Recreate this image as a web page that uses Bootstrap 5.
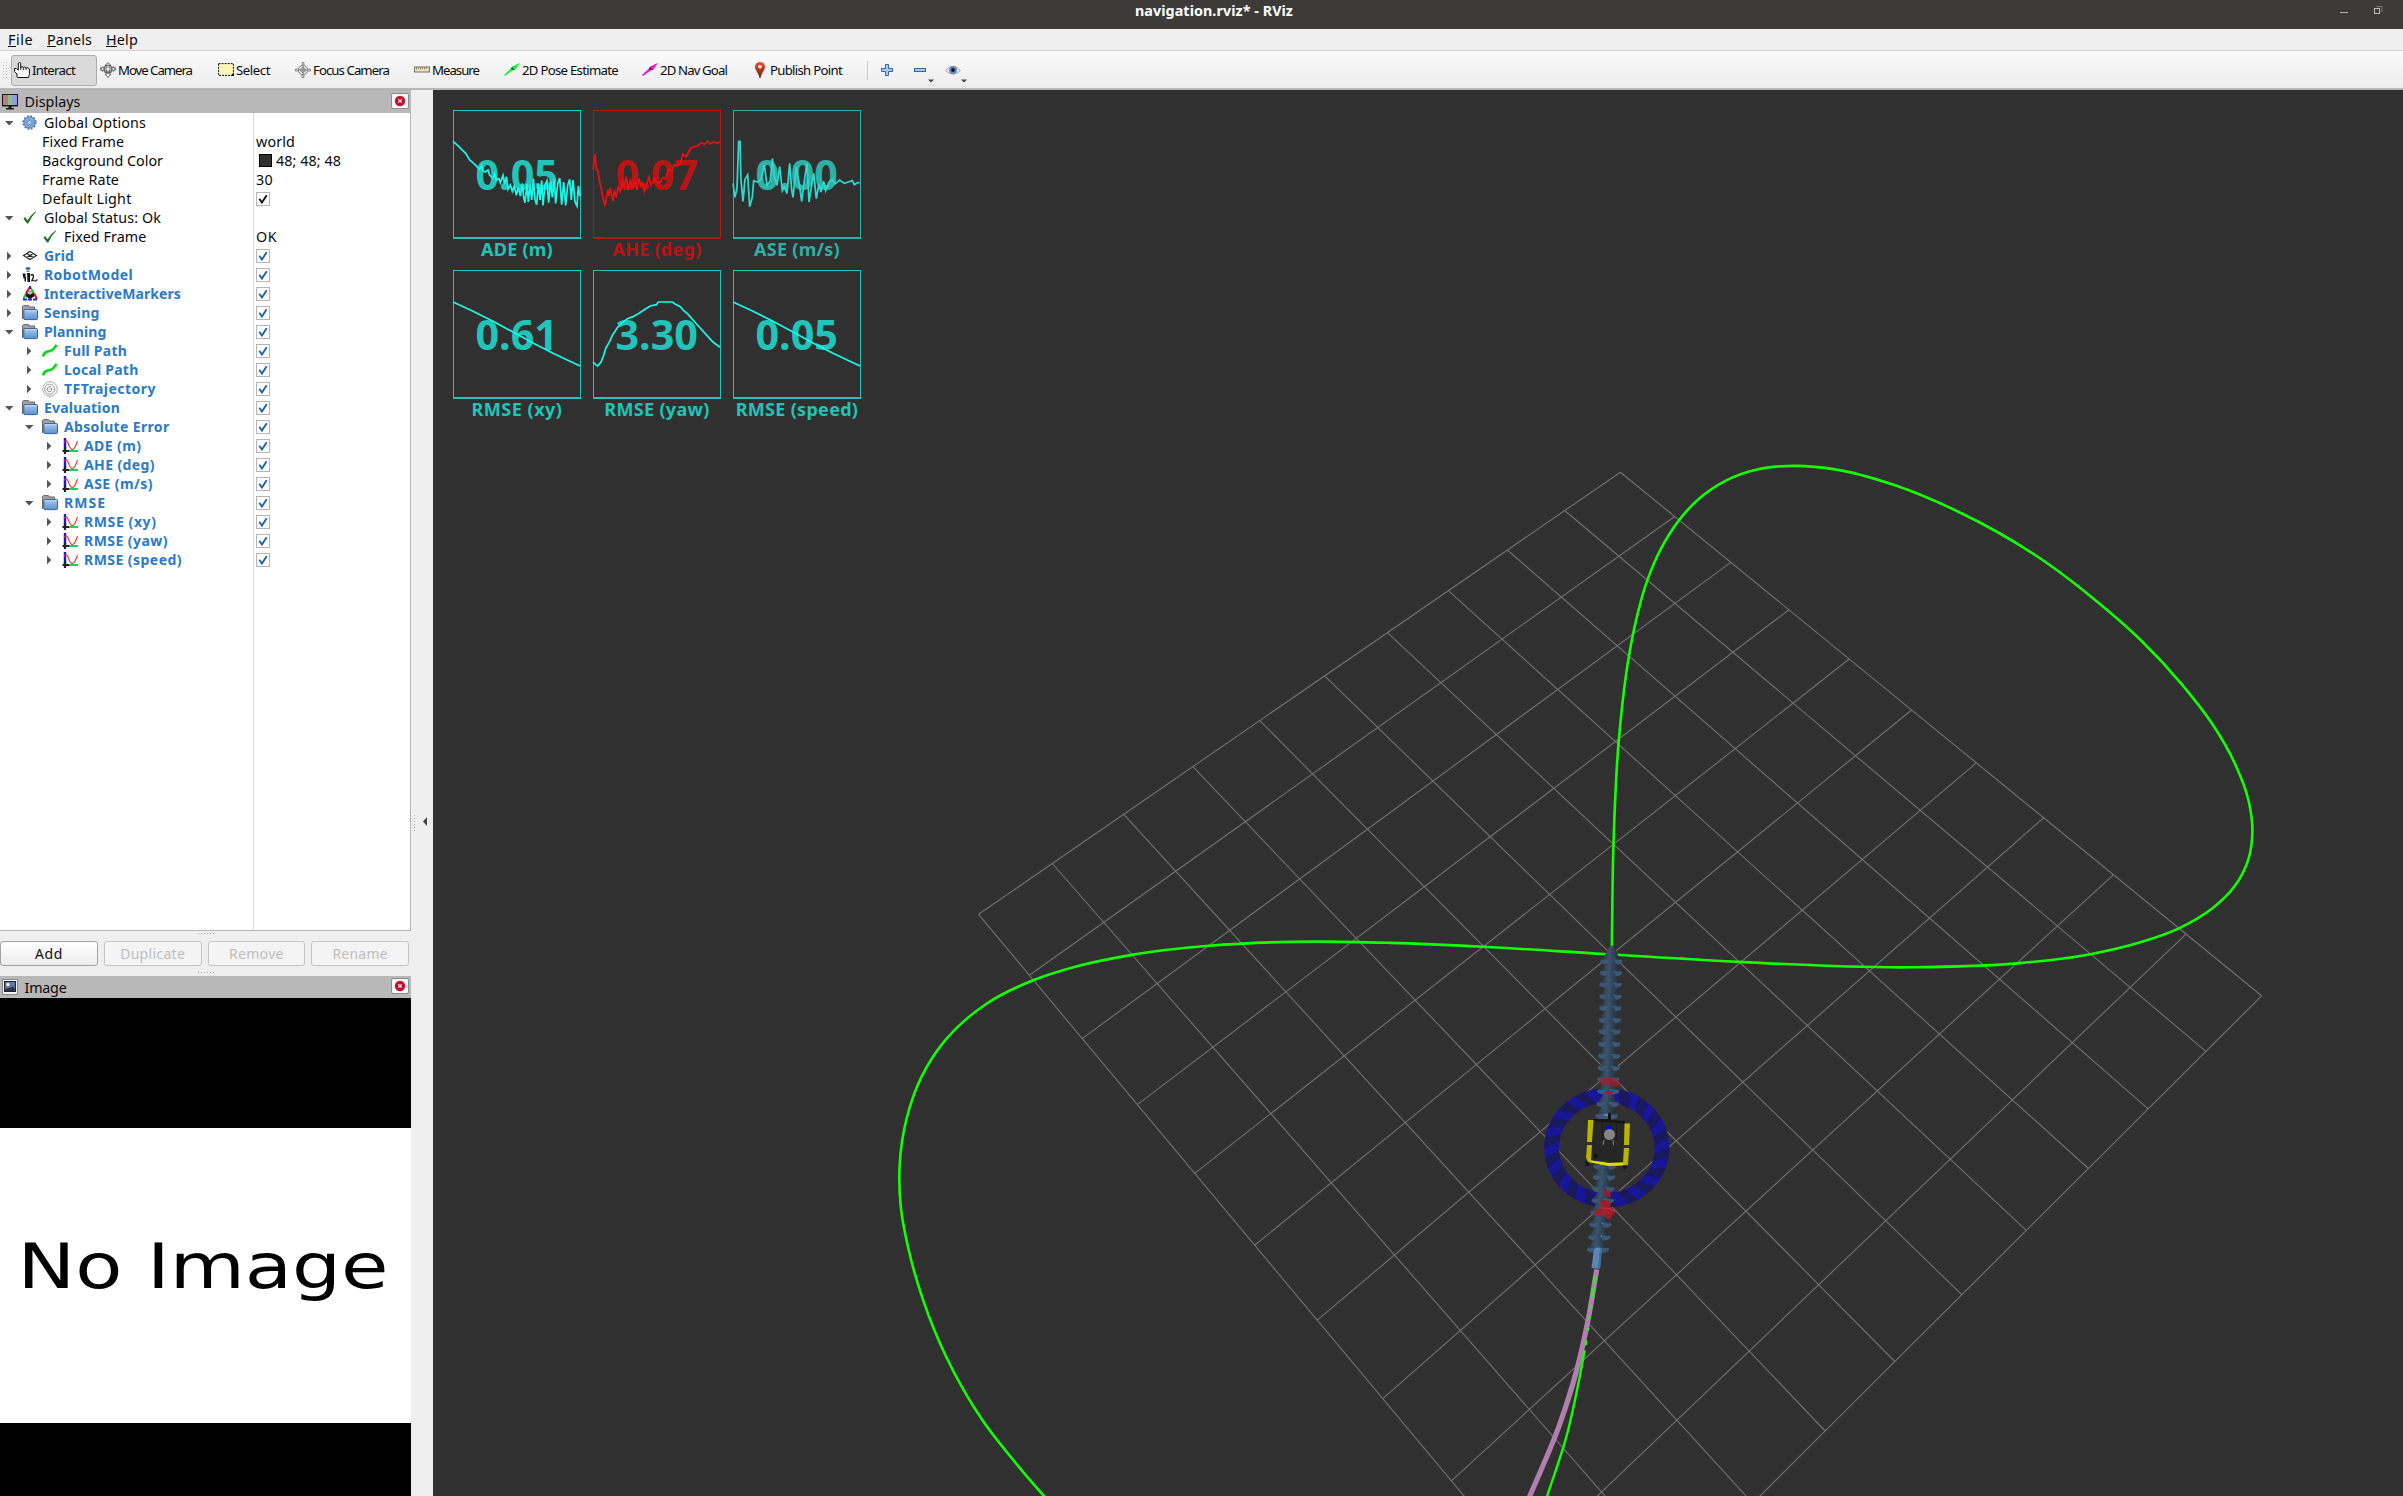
<!DOCTYPE html>
<html lang="en">
<head>
<meta charset="utf-8">
<title>navigation.rviz* - RViz</title>
<link href="https://cdn.jsdelivr.net/npm/bootstrap@5.3.0/dist/css/bootstrap.min.css" rel="stylesheet">
<style>
body{font-family:"Noto Sans","Open Sans",sans-serif;font-size:14.3px;line-height:19px;color:#0a0a0a;background:#efefef;overflow:hidden}
.window{width:2403px;height:1496px}
.titlebar{height:29px;background:#3c3b39;color:#fff;font-weight:700;padding-left:1135px}
.titlebar .caption{width:1205px;line-height:22px}
.menus{height:22px;padding-left:8px;gap:14px;background:#efefef;border-bottom:1px solid #d2d2d2}
.tools{height:39px;background:linear-gradient(#fafafa,#ededed);border-bottom:1px solid #b4b4b4;box-shadow:inset 0 -1px 0 #b8b8b8;padding-left:3px;font-size:13.2px}
.tool{height:31px;padding-left:3px;gap:2px;white-space:nowrap}
.tool-on{background:#dadada;border:1px solid #acacac;border-radius:3px;padding-left:2px}
.grip{width:8px}
.tools svg.ic,.tree svg.ic{width:16px;height:16px;flex:none}
.side{width:411px}
.gutter{width:22px}
.panel-head{background:#b8b8b8;padding:0 2px}
.head-label{gap:6.5px}
.closer{width:18px;height:16px;background:#f8f8f8;border:1px solid #8c8c8c;border-radius:2px;margin-bottom:2px}
.tree{height:818px;background:#fff;border-right:1px solid #b4b4b4;border-bottom:1px solid #b4b4b4}
.names{width:254px;border-right:1px solid #d8d8d8}
.line{height:19px;white-space:nowrap}
.twist{width:18px;height:10px;flex:none;margin-right:4px}
.disp{font-weight:700;color:#2a7ac8;font-size:14px}
.ind0{padding-left:0}.ind1{padding-left:20px}.ind2{padding-left:40px}.plain{padding-left:42px}
.picto{width:16px;height:16px;margin-right:6px;flex:none}
.vals .line{padding-left:2px}
.box{width:14px;height:14px}
.swatch{width:13px;height:13px;background:#303030;border:1px solid #000;margin:0 4px 0 3px}
.btns{height:25px;gap:6px;padding-right:2px}
.pbtn{height:25px;border:1px solid #a4a4a4;border-radius:3px;background:linear-gradient(#fff,#ececec);font-size:14px;line-height:22px;color:#111}
.pbtn:disabled{color:#bebebe;border-color:#c4c4c4;background:#f4f4f4}
.noimg{height:498px;background:#000;padding-top:130px}
.sheet{height:295px;background:#fff}
.scene{width:1970px;height:1406px;background:#303030;position:relative}
.overlays{position:absolute;left:20px;top:20px}
.plots{gap:12px}
.plot{width:128px;height:160px;--c:#20c4b8;--l:#1bf7e8;color:var(--c)}
.plot.warn{--c:#b81414;--l:#e81010}
.plot.dim{--c:#2fb0a6;--l:#2fd8cc}
.frame{height:129px;border:1px solid var(--c);border-bottom-width:2px}
.frame svg{display:block;width:126px;height:126px;overflow:visible}
.frame polyline{fill:none;stroke:var(--l);stroke-width:5.2}
.frame text{fill:var(--c);font:700 124px "Noto Sans",sans-serif;text-anchor:middle}
.cap{font-weight:700;font-size:18px;line-height:20px}
</style>
</head>
<body>
<svg width="0" height="0" class="position-absolute">
<defs>
<linearGradient id="gf" x1="0" y1="0" x2="0" y2="1"><stop offset="0" stop-color="#aac8ec"/><stop offset="1" stop-color="#5a90d0"/></linearGradient>
<linearGradient id="gp" x1="0" y1="0" x2="0" y2="1"><stop offset="0" stop-color="#f05030"/><stop offset="1" stop-color="#5a2810"/></linearGradient>
<linearGradient id="gc"><stop offset="0" stop-color="#2a3a4a"/><stop offset=".4" stop-color="#3a536c"/><stop offset="1" stop-color="#1f2a35"/></linearGradient>
<symbol id="folder" viewBox="0 0 16 16"><path d="M.5 14V1.5L1.500.6H6.500L7.500 2H12.500V5" fill="#a2a2a2" stroke="#666"/><rect x="1.800" y="4.600" width="13.700" height="10" rx="1" fill="url(#gf)" stroke="#31639c"/><path d="M2.800 5.800H14.500" stroke="#d4e4f6" stroke-width=".8"/></symbol>
<symbol id="ok" viewBox="0 0 16 16"><path d="M1.500 8.500 3 7 5.500 10.300Q9 4.500 13.800 1.200L14 2Q9 7 6.200 13.500H5Z" fill="#1c7420"/></symbol>
<symbol id="gear" viewBox="0 0 16 16"><circle cx="7.500" cy="7.500" r="5.600" fill="#8cb0dc" stroke="#3f6fae"/><circle cx="7.500" cy="7.500" r="6.400" fill="none" stroke="#4878b4" stroke-width="1.600" stroke-dasharray="1.700 1.650"/><circle cx="7.500" cy="7.500" r="3.400" fill="none" stroke="#4f7db8" stroke-dasharray="1 1"/><circle cx="7.500" cy="7.500" r="1.700" fill="#e8f0fa" stroke="#3f6fae" stroke-width=".7"/></symbol>
<symbol id="gridi" viewBox="0 0 16 16"><path d="M1.500 7.500 8 3.500 14.500 7.500 8 11.500ZM4.800 5.500 11.300 9.500M11.300 5.500 4.800 9.500" fill="none" stroke="#222" stroke-width="1.100"/></symbol>
<symbol id="robot" viewBox="0 0 16 16"><ellipse cx="6" cy="1.500" rx="2.500" ry="1.200" fill="#36508c"/><path d="M4.500 3.500H7.500V5H4.500Z" fill="#777"/><path d="M.5 6.500H3.500V11.500H1.500ZM5 6H8V15H5.500ZM2.500 10H4V14.500H2.500Z" fill="#161616"/><path d="M8.500 8 11 7.500 11.500 10 9.800 13.500H12.500M13 14.500 15.500 12.500" fill="none" stroke="#222" stroke-width="1.300"/></symbol>
<symbol id="marker" viewBox="0 0 16 16"><path d="M8 1 12 7" stroke="#18c818" stroke-width="2"/><path d="M8 1 4 7" stroke="#e01818" stroke-width="2"/><path d="M12.200 7.500 15 13" stroke="#e01818" stroke-width="2"/><path d="M4 7.500 1.500 13" stroke="#1ac81a" stroke-width="2"/><path d="M1 13.500H15" stroke="#2020f0" stroke-width="2" stroke-dasharray="4 1"/><path d="M8 0V3" stroke="#2020f0" stroke-width="2"/><path d="M8 4.500 12 7.500V10.500L8 13 4 10.500V7.500Z" fill="#151515"/><path d="M8 5 11 7 8 8.800 5 7Z" fill="#c8c8c8"/></symbol>
<symbol id="path" viewBox="0 0 16 16"><path d="M1 13.500C2 8.500 5.500 8.500 8 8 11 7.300 12 6 14.500 1.800" fill="none" stroke="#08d818" stroke-width="2.600"/></symbol>
<symbol id="spiral" viewBox="0 0 16 16"><circle cx="8" cy="8" r="7.300" fill="none" stroke="#aaa"/><circle cx="7.700" cy="8.200" r="5" fill="none" stroke="#999"/><path d="M7.500 8.500Q8 6.500 9.500 7.500 10.500 10 8 11 5 10.500 5.200 8 6 5 9 5.500" fill="none" stroke="#888" stroke-width=".9"/></symbol>
<symbol id="plot" viewBox="0 0 16 16"><path d="M3 0V12" stroke="#1414f0" stroke-width="2.400"/><path d="M4 13H16" stroke="#10d850" stroke-width="2"/><path d="M.5 13H7M3 9V16" stroke="#222" stroke-width="2.200"/><path d="M2 4.500Q4.500 1 6 5 8.500 12 10.500 11.500 13 11 15.500 3" fill="none" stroke="#f03030" stroke-width="1.100"/></symbol>
<symbol id="box" viewBox="0 0 14 14"><rect x=".5" y=".5" width="13" height="13" fill="#fff" stroke="#b4b4b4"/><path d="M3.300 6.800 5.900 10.500 10.700 3.200" fill="none" stroke="currentColor" stroke-width="1.900"/></symbol>
<symbol id="down" viewBox="0 0 18 10"><path d="M5 3H13.500L9.200 7.500Z" fill="#555"/></symbol>
<symbol id="right" viewBox="0 0 18 10"><path d="M7 .8V9.200L11.300 5Z" fill="#555"/></symbol>
<symbol id="x" viewBox="0 0 12 12"><circle cx="6" cy="6" r="5.200" fill="#c8102e"/><path d="M4.300 4.300 7.700 7.700M7.700 4.300 4.300 7.700" stroke="#fff" stroke-width="1.200"/></symbol>
</defs>
</svg>

<div class="window d-flex flex-column">
<header class="titlebar d-flex">
 <div class="caption"><span data-w="157">navigation.rviz* - RViz</span></div>
 <svg width="48" height="20"><path d="M0 12.500H8" stroke="#b8b7b3"/><path d="M36.500 6.500H42V12" fill="none" stroke="#7a7976"/><rect x="34.500" y="8.500" width="5" height="5" fill="none" stroke="#c0bfbb"/></svg>
</header>
<nav class="menus d-flex align-items-center">
 <span data-w="24"><u>F</u>ile</span><span data-w="44"><u>P</u>anels</span><span data-w="31"><u>H</u>elp</span>
</nav>
<div class="tools d-flex align-items-center">
 <svg class="grip" width="8" height="20"><path d="M.5 2V18M3.500 2V18" stroke="#bbb" stroke-dasharray="1 2"/></svg>
 <div class="tool tool-on d-flex align-items-center" style="width:86px"><svg class="ic" viewBox="0 0 16 16"><path d="M3 15V12L.6 9.500V6.500H2.500L4.300 8.200V1.200L5.500.5 6.700 1.200V5.500L8 4.600 9.300 5.500 10.700 5 12 6 14 5.800 15.400 7V12.500L14.500 15.500H3.500Z" fill="#fff" stroke="#111"/><path d="M6.700 5V8M9.300 5.500V8M12 6V8" stroke="#111" stroke-width=".9"/></svg><span data-w="42">Interact</span></div>
 <div class="tool d-flex align-items-center" style="width:118px"><svg class="ic" viewBox="0 0 16 16" fill="#eee" stroke="#555" stroke-width=".9"><path d="M8 .5 11 3.500H9.200V6H13V4.500L15.600 7 13 9.500V8H9.200V12H11L8 15.500 5 12H6.800V8H3V9.500L.4 7 3 4.500V6H6.800V3.500H5Z"/><circle cx="8" cy="7" r="4" fill="none"/><path d="M4 10H12M1 5V9M15 5V9" fill="none"/></svg><span data-w="73">Move Camera</span></div>
 <div class="tool d-flex align-items-center" style="width:77px"><svg class="ic" viewBox="0 0 16 16"><rect x=".6" y="1.600" width="14.800" height="11.800" fill="#fdf6b8" stroke="#111" stroke-dasharray="2 1"/><path d="M16 10.500V14H12.500Z"/></svg><span data-w="33">Select</span></div>
 <div class="tool d-flex align-items-center" style="width:119px"><svg class="ic" viewBox="0 0 16 16" fill="none" stroke="#777"><circle cx="8" cy="8" r="4.600"/><circle cx="8" cy="8" r="2.300"/><path d="M8 0V16M0 8H16"/><path d="M7 .5H9V3.500H7ZM7 12.500H9V15.500H7ZM.5 7H3.500V9H.5ZM12.500 7H15.500V9H12.500Z" fill="#ccc" stroke-width=".7"/></svg><span data-w="75">Focus Camera</span></div>
 <div class="tool d-flex align-items-center" style="width:90px"><svg class="ic" viewBox="0 0 16 16"><rect x=".5" y="5" width="15" height="5" fill="#ece2b0" stroke="#77745e"/><path d="M2.500 5V7.500M4.500 5V7M6.500 5V7.500M8.500 5V7M10.500 5V7.500M12.500 5V7" stroke="#77745e" stroke-width=".8"/></svg><span data-w="46">Measure</span></div>
 <div class="tool d-flex align-items-center" style="width:138px"><svg class="ic" viewBox="0 0 16 16"><path d="M0 13 7 6.500 8 4.800 16 .8 11 8 8.500 8.500 1 14Z" fill="#10f040"/><path d="M7 6.500 10.500 7.500M8 5 9 8" stroke="#087020"/></svg><span data-w="95">2D Pose Estimate</span></div>
 <div class="tool d-flex align-items-center" style="width:110px"><svg class="ic" viewBox="0 0 16 16"><path d="M0 13 7 6.500 8 4.800 16 .8 11 8 8.500 8.500 1 14Z" fill="#f010d0"/><path d="M7 6.500 10.500 7.500M8 5 9 8" stroke="#700860"/></svg><span data-w="66">2D Nav Goal</span></div>
 <div class="tool d-flex align-items-center" style="width:118px"><svg class="ic" viewBox="0 0 16 16"><path d="M8 0C4.800 0 3 2.300 3 5 3 8.500 6.500 10.500 7.500 16H8.500C9.500 10.500 13 8.500 13 5 13 2.300 11.200 0 8 0Z" fill="url(#gp)"/><circle cx="8" cy="4.700" r="1.800" fill="#f4ece8"/></svg><span data-w="71">Publish Point</span></div>
 <svg width="110" height="31" viewBox="867 55 110 31"><path d="M867.500 61V80" stroke="#ccc"/><path d="M885.500 64.500H888.500V68.500H892.500V71.500H888.500V75.500H885.500V71.500H881.500V68.500H885.500Z" fill="#a8c8ec" stroke="#2f68aa"/><rect x="914.500" y="68.500" width="11" height="3" fill="#a8c8ec" stroke="#2f68aa"/><path d="M928 79.500H934L931 82.500ZM961 79.500H967L964 82.500Z" fill="#444"/><path d="M945.500 70.500Q953 62 960.500 70.500 953 78 945.500 70.500Z" fill="#e8e8e8" stroke="#aaa"/><circle cx="953" cy="70" r="4" fill="#6888c0"/><circle cx="953" cy="70" r="1.900" fill="#101020"/></svg>
</div>

<main class="d-flex flex-grow-1">
 <aside class="side d-flex flex-column">
  <div class="panel-head d-flex align-items-center justify-content-between" style="height:23px">
   <div class="d-flex align-items-center head-label"><svg width="16" height="16" viewBox="0 0 16 16"><rect width="16" height="12.500" fill="#1a1a1a"/><path d="M1 1H6V11H1Z" fill="#c07a80"/><path d="M6 1H10V11H6Z" fill="#80c888"/><path d="M10 1H15V11H10Z" fill="#9a98e0"/><path d="M6.500 12H9.500V14H12V15.500H4V14H6.500Z" fill="#1a1a1a"/></svg><span data-w="55">Displays</span></div>
   <div class="closer d-flex align-items-center justify-content-center"><svg width="12" height="12"><use href="#x"/></svg></div>
  </div>
  <div class="tree d-flex"><div class="names" id="names"></div><div class="vals flex-grow-1" id="vals"></div></div>
  <svg width="411" height="10"><path d="M198 2.500H215" stroke="#aaa" stroke-dasharray="1 2"/></svg>
  <div class="btns d-flex">
   <button class="pbtn p-0 flex-fill w-25"><span data-w="27">Add</span></button><button class="pbtn p-0 flex-fill w-25" disabled><span data-w="64">Duplicate</span></button><button class="pbtn p-0 flex-fill w-25" disabled><span data-w="54">Remove</span></button><button class="pbtn p-0 flex-fill w-25" disabled><span data-w="54.500">Rename</span></button>
  </div>
  <svg width="411" height="10"><path d="M198 6.500H215" stroke="#aaa" stroke-dasharray="1 2"/></svg>
  <div class="panel-head d-flex align-items-center justify-content-between" style="height:22px">
   <div class="d-flex align-items-center head-label"><svg width="16" height="16"><rect x=".5" y=".5" width="15" height="15" fill="#f4f4f4" stroke="#888"/><rect x="2.500" y="2.500" width="11" height="10" fill="#5878a8" stroke="#223"/><circle cx="6" cy="5.500" r="1.700" fill="#fff8c8"/><path d="M3 12V10L7 9 11 7.500 13 10V12Z" fill="#2c3440"/></svg><span data-w="41">Image</span></div>
   <div class="closer d-flex align-items-center justify-content-center"><svg width="12" height="12"><use href="#x"/></svg></div>
  </div>
  <div class="noimg"><div class="sheet"><svg width="411" height="295"><text x="17.500" y="160" font-family="DejaVu Sans" font-size="62.500" textLength="371" lengthAdjust="spacingAndGlyphs">No Image</text></svg></div></div>
 </aside>
 <div class="gutter"><svg width="22" height="1406" viewBox="411 90 22 1406"><path d="M423 821.500 427 817V826Z" fill="#444"/><path d="M414.500 815V832" stroke="#aaa" stroke-dasharray="1 2"/></svg></div>
 <section class="scene">
  <svg class="d-block" width="1970" height="1406" viewBox="433 90 1970 1406" id="view"></svg>
  <div class="overlays d-flex flex-column" id="ov"></div>
 </section>
</main>
</div>

<script src="https://cdn.jsdelivr.net/npm/bootstrap@5.3.0/dist/js/bootstrap.bundle.min.js"></script>
<script>
// Display tree: level, twisty, icon, label, label width, value kind
const rows=[
 [0,'down','gear','Global Options',101,''],
 [-1,'','','Fixed Frame',81,'t:world:38'],
 [-1,'','','Background Color',120,'c'],
 [-1,'','','Frame Rate',76,'t:30:16'],
 [-1,'','','Default Light',88.5,'k'],
 [0,'down','ok','Global Status: Ok',116,''],
 [1,'','ok','Fixed Frame',81.5,'t:OK:20'],
 [0,'right','gridi','Grid',29,'b'],[0,'right','robot','RobotModel',88,'b'],
 [0,'right','marker','InteractiveMarkers',136,'b'],[0,'right','folder','Sensing',54.5,'b'],
 [0,'down','folder','Planning',61.5,'b'],[1,'right','path','Full Path',62,'b'],
 [1,'right','path','Local Path',73.5,'b'],[1,'right','spiral','TFTrajectory',91,'b'],
 [0,'down','folder','Evaluation',75,'b'],[1,'down','folder','Absolute Error',104.5,'b'],
 [2,'right','plot','ADE (m)',56.5,'b'],[2,'right','plot','AHE (deg)',70,'b'],[2,'right','plot','ASE (m/s)',68,'b'],
 [1,'down','folder','RMSE',41,'b'],
 [2,'right','plot','RMSE (xy)',71.5,'b'],[2,'right','plot','RMSE (yaw)',83,'b'],[2,'right','plot','RMSE (speed)',97,'b']];
let n='',v='';
for(const [l,t,i,s,w,k] of rows){
 const lab=`<span data-w="${w}">${s}</span>`;
 n+=l<0?`<div class="line d-flex align-items-center plain">${lab}</div>`
  :`<div class="line d-flex align-items-center ind${l} ${k==='b'?'disp':''}"><svg class="twist">${t?`<use href="#${t}"/>`:''}</svg><svg class="picto"><use href="#${i}"/></svg>${lab}</div>`;
 let c='';
 if(k==='b')c='<svg class="box" color="#1e62a8"><use href="#box"/></svg>';
 if(k==='k')c='<svg class="box" color="#111"><use href="#box"/></svg>';
 if(k==='c')c='<span class="swatch"></span><span data-w="64">48; 48; 48</span>';
 if(k[0]==='t'){const p=k.split(':');c=`<span data-w="${p[2]}">${p[1]}</span>`}
 v+=`<div class="line d-flex align-items-center">${c}</div>`;
}
names.innerHTML=n;vals.innerHTML=v;

// Plot overlays
const slope='0,96 60,124 120,154 180,186 240,219 300,250 381,288';
const plots=[
 ['','0.05','ADE (m)',71,'0,94 14,106 26,118 38,130 50,150 62,160 74,172 80,178 86,166 90,182 97,186 105,180 110,196 120,204 125,192 130,210 138,206 142,218 150,196 155,222 160,200 165,238 172,225 178,244 184,228 190,256 196,232 202,258 208,220 212,262 216,278 222,222 226,276 231,224 236,270 241,206 246,268 251,284 256,220 261,270 266,212 270,286 276,224 282,212 287,278 293,214 298,262 304,208 308,280 314,222 320,204 326,284 332,216 338,286 344,226 350,208 355,270 360,210 366,276 372,288 376,228 381,258'],
 ['warn','0.07','AHE (deg)',88,'0,178 6,132 10,178 14,180 20,216 26,240 30,266 36,288 44,240 48,258 52,234 60,274 64,240 70,262 76,230 82,244 88,214 94,232 100,200 106,240 112,208 118,238 124,210 132,240 138,206 144,232 148,216 154,244 160,226 168,202 174,226 184,206 192,220 204,214 208,204 218,206 226,178 236,184 244,164 252,168 262,160 270,132 280,140 292,116 302,110 314,108 326,98 334,104 344,94 352,102 362,96 372,100 381,96'],
 ['dim','0.00','ASE (m/s)',85,'0,220 6,262 12,235 17,94 21,94 24,210 30,274 36,208 44,195 50,290 58,262 62,212 74,216 84,208 94,164 102,226 112,212 118,146 124,200 132,226 140,170 148,242 154,230 162,250 170,160 176,240 180,262 190,170 200,230 206,274 212,226 222,160 228,276 236,226 242,190 250,266 258,222 264,246 272,214 278,242 288,216 298,208 306,222 320,210 334,220 346,216 358,212 364,224 374,218 380,218'],
 ['','0.61','RMSE (xy)',90,slope],
 ['','3.30','RMSE (yaw)',104.5,'0,276 8,284 14,288 24,276 32,256 38,236 50,214 58,196 74,172 90,156 104,146 120,140 138,130 156,118 172,108 190,104 196,96 238,96 246,102 262,110 270,120 286,134 300,150 316,168 336,190 360,216 381,232'],
 ['','0.05','RMSE (speed)',121.5,slope]];
const card=([c,val,cap,w,pts])=>`<div class="plot ${c}"><div class="frame"><svg viewBox="3 3 378 378"><text x="191" y="240">${val}</text><polyline points="${pts}"/></svg></div><div class="cap text-center text-nowrap"><span data-w="${w}">${cap}</span></div></div>`;
ov.innerHTML=[0,3].map(i=>`<div class="plots d-flex">${plots.slice(i,i+3).map(card).join('')}</div>`).join('');

// Ground grid in perspective
const P=(s,t)=>{const d=1-.016797*s-.014551*t;return [((1620.4+26.13*s-78.43*t)/d).toFixed(1),((472.2+35.63*s+30.91*t)/d).toFixed(1)]};
let g='';
for(let i=0;i<=10;i++)g+=`M${P(i,0)}L${P(i,10)}M${P(0,i)}L${P(10,i)}`;
let out=`<path d="${g}" fill="none" stroke="#727272" stroke-width="1.1"/>`;
// Smooth curve through way points, tangents weighted by chord length
const curve=p=>{
 const h=p.slice(1).map((q,i)=>Math.hypot(q[0]-p[i][0],q[1]-p[i][1]));
 const sl=(i,k)=>(p[i+1][k]-p[i][k])/h[i];
 const m=p.map((_,i)=>[0,1].map(k=>i===0?sl(0,k):i===p.length-1?sl(i-1,k):(h[i]*sl(i-1,k)+h[i-1]*sl(i,k))/(h[i]+h[i-1])));
 let d='M'+p[0];
 for(let i=0;i<h.length;i++){const t=h[i]/3;d+=`C${p[i][0]+m[i][0]*t},${p[i][1]+m[i][1]*t} ${p[i+1][0]-m[i+1][0]*t},${p[i+1][1]-m[i+1][1]*t} ${p[i+1]}`}
 return d};
const full=[[1611.8,950],[1613.5,844],[1618.7,741.5],[1629,655.7],[1634.2,628.6],[1647.2,580.6],[1660.8,549.1],[1679.5,519.6],[1699,498.7],[1725.5,480.8],[1755.9,469.8],[1794.9,465.9],[1836.2,469.6],[1893.6,484.8],[1956.8,511],[2044,561],[2094.5,599.4],[2140.4,639.7],[2182.3,684.8],[2212.2,723.8],[2235.2,764.2],[2248.6,800.7],[2252.4,830.2],[2248.2,859.8],[2234.4,886.6],[2212.2,908.5],[2178.9,928.3],[2140.4,942.3],[2090.5,954.2],[2017,963.4],[1910.8,967.3],[1738.7,961.9],[1603.5,954],[1483.6,946.8],[1390.2,942.9],[1313.7,941.6],[1209.1,945.8],[1130.5,955.1],[1079,965.8],[1032,980.8],[987.7,1003],[945.3,1040.2],[921,1077.9],[906.5,1119],[899.6,1166.1],[900.9,1207.9],[908.2,1247.8],[922.8,1299.1],[946.3,1357],[982,1419.5],[1015.7,1463],[1043.3,1495.2],[1052,1505]];
const gs='fill="none" stroke="#16ff00" ';
out+=`<path d="${curve(full)}" ${gs} stroke-width="2.6"/>`;
out+=`<path d="${curve([[1596.8,1269.4],[1587.7,1321.9],[1576.4,1371.3],[1559.8,1424],[1529,1498]])}" fill="none" stroke="#b07fae" stroke-width="5.2"/>`;
out+=`<path d="${curve([[1595,1276],[1591.5,1303],[1585.6,1344.7],[1579.3,1378.9],[1566.6,1435.9],[1546.5,1498]])}" ${gs} stroke-width="2.4" stroke-dasharray="8 4 10 8 3 8 3 8 3 10 5 5 300"/>`;
// Striped control ring
out+='<ellipse cx="1606.8" cy="1147.8" rx="55.2" ry="52.2" fill="none" stroke="#161696" stroke-width="14.5"/>';
const R=(a,rx,ry)=>[(1606.8+rx*Math.cos(a)).toFixed(1),(1147.8+ry*Math.sin(a)).toFixed(1)];
for(let i=0;i<18;i++){const a=i*Math.PI/9,b=a+Math.PI/18,k=.13;out+=`<path d="M${R(a,62.5,59.5)}L${R(b,62.5,59.5)}L${R(b+k,48,45)}L${R(a+k,48,45)}Z" fill="#19195c"/>`}
// Arrow trail; each entry is the centre of a cone base
const cone=(x,y)=>`<ellipse cx="${x}" cy="${y+.6}" rx="11.300" ry="3.900" fill="#3d5876"/><path d="M${x-9.3},${y-.6}L${x-1.2},${y-15}H${x+1.6}L${x+9.3},${y-.6}Q${x},${y-2.4} ${x-9.3},${y-.6}Z" fill="url(#gc)"/><ellipse cx="${x}" cy="${y-.3}" rx="2.800" ry="1.300" fill="#6088b8"/>`;
const tr=a=>a.map(([x,y])=>cone(1500+x/3,930+y/3)).join('');
out+=tr([[334,92],[333,127],[332,162],[332,198],[331,232],[330,268],[329,303],[328,340],[327,376],[326,412],[325,446],[325,482],[323,520],[320,556],[314,708],[312,740],[310,775],[308,810],[304,845],[301,882],[298,920],[294,957]]);
out+='<g fill="#b01822" opacity=".85"><path opacity=".75" d="M1599 1082Q1602 1076 1609 1077 1619 1078 1621 1085 1619 1087 1616 1087L1599 1084Z"/><path d="M1603 1091H1614L1612 1095 1606 1094Z"/><path d="M1602 1191 1610 1190 1611 1197 1607 1196ZM1600 1201 1609 1200 1611 1207 1616 1212 1608 1220 1606 1217 1595 1215 1593 1212 1601 1208Z"/></g><path d="M1601 1208Q1608 1207 1615 1211" stroke="#d83038" fill="none"/>';
out+='<path d="M1594 1249 1602 1248 1600 1269 1591.500 1268Z" fill="#5c84b4"/><path d="M1600 1248H1602L1600 1269H1598Z" fill="#466a96"/>';
// Robot
out+='<path d="M1587 1160 1590 1166 1586 1166 1585 1162ZM1622 1164H1627V1168L1624 1170Z" fill="#181818"/><path d="M1593 1119 1625 1121 1622 1163 1591 1160Z" fill="#262626"/><path d="M1593 1119 1608 1119V1113H1611V1120L1625 1121V1124L1593 1121Z" fill="#151515"/><path d="M1588 1120H1593.500L1592 1142H1587ZM1624.500 1123.500H1630L1629 1145H1624Z" fill="#b8b400"/><path d="M1587 1145H1592L1591 1160.500 1608 1163 1623 1162.500 1624 1148H1629L1628 1165 1616 1166 1601 1164.500 1588 1162 1586 1158Z" fill="#b8b400"/><path d="M1591 1160.500 1608 1163 1623 1162.500V1165L1608 1166 1590 1162Z" fill="#e0dc00"/><path d="M1602.500 1124V1140M1616.500 1124V1141" stroke="#111" stroke-dasharray="2 1.500"/><path d="M1604 1140 1603 1145M1613 1140 1613.500 1145" stroke="#888"/><rect x="1606" y="1125" width="6" height="5" fill="#0808d8"/><circle cx="1609.500" cy="1134.500" r="5.500" fill="#858585"/><circle cx="1595.500" cy="1156" r="2.500" fill="#161616"/>';
view.innerHTML=out;

// Tighten letter spacing so each label takes its measured width
document.querySelectorAll('[data-w]').forEach(e=>{const w=+e.dataset.w,c=e.textContent.length;
 e.style.letterSpacing=((w+1-e.getBoundingClientRect().width)/c).toFixed(3)+'px'});
</script>
</body>
</html>
